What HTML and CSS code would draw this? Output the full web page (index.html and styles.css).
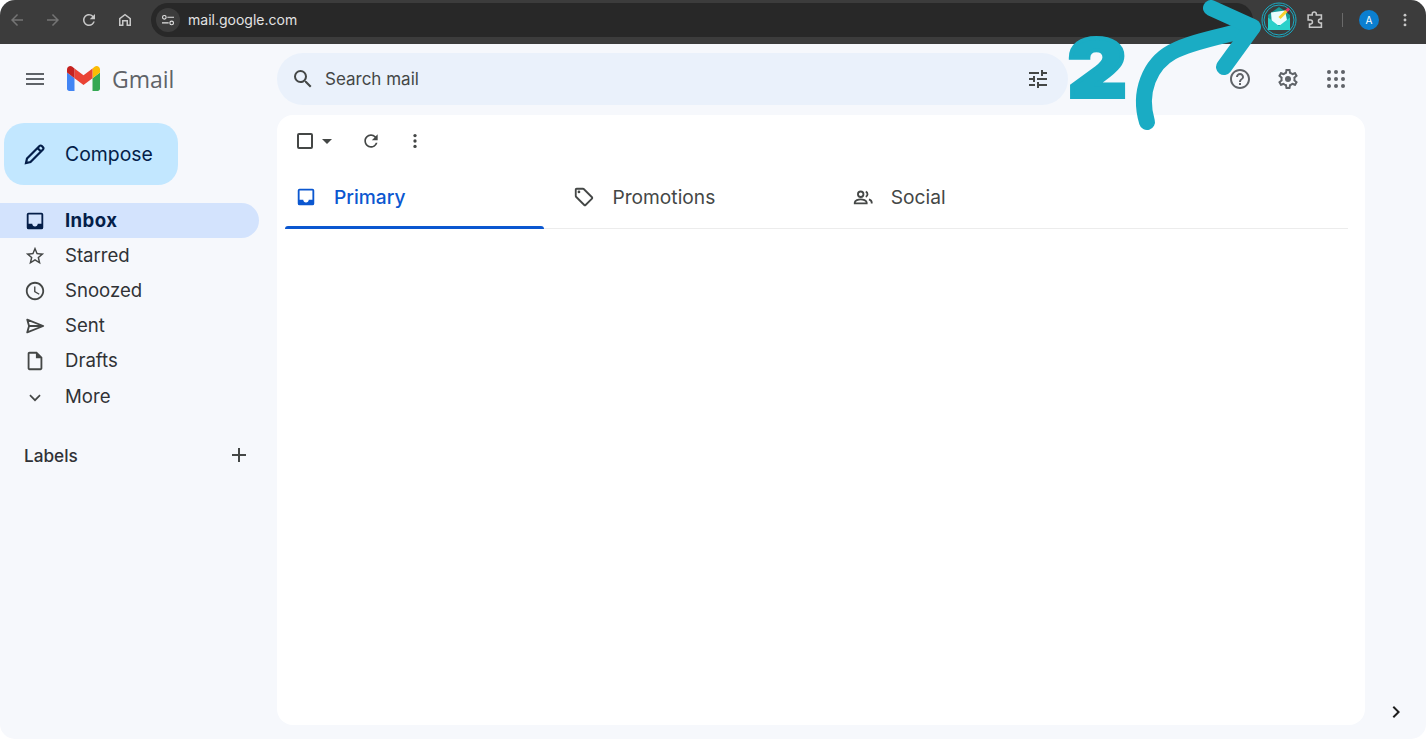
FILE: index.html
```html
<!DOCTYPE html>
<html lang="en">
<head>
<meta charset="utf-8">
<title>Gmail</title>
<link rel="stylesheet" href="styles.css">
</head>
<body>
<div class="window">
  <header class="chrome">
    <div class="chrome-nav">
      <svg class="cicon dim" viewBox="0 0 24 24"><path d="M20 11H7.800l5.600-5.600L12 4l-8 8 8 8 1.400-1.400L7.800 13H20z"/></svg>
      <svg class="cicon dim" viewBox="0 0 24 24"><path d="M4 11h12.200l-5.600-5.600L12 4l8 8-8 8-1.400-1.400 5.600-5.600H4z"/></svg>
      <svg class="cicon" viewBox="0 0 24 24"><path d="M17.650 6.350A7.958 7.958 0 0 0 12 4c-4.420 0-7.990 3.580-7.990 8s3.570 8 7.990 8c3.730 0 6.840-2.550 7.730-6h-2.080A5.990 5.990 0 0 1 12 18c-3.310 0-6-2.690-6-6s2.690-6 6-6c1.660 0 3.140.69 4.220 1.780L13 11h7V4l-2.350 2.350z"/></svg>
      <svg class="cicon" viewBox="0 0 24 24"><path d="M12 3.500 4 9.500V20h6v-6h4v6h6V9.500zM18 18h-2v-6H8v6H6v-7.500l6-4.500 6 4.500z"/></svg>
    </div>
    <div class="omnibox">
      <span class="site-info">
        <svg viewBox="0 0 24 24" class="site-svg"><path d="M3 15.500h10v1.800H3zM11 7h10v1.800H11z"/><circle cx="6.500" cy="8" r="2.700" fill="none" stroke="#e3e3e3" stroke-width="1.700"/><circle cx="17.500" cy="16.400" r="2.700" fill="none" stroke="#e3e3e3" stroke-width="1.700"/></svg>
      </span>
      <span class="url">mail.google.com</span>
    </div>
    <div class="chrome-actions">
      <span class="ext">
        <svg viewBox="0 0 36 36" class="ext-svg">
          <circle cx="18" cy="18" r="17" fill="none" stroke="#1aacc4" stroke-width="1"/>
          <circle cx="18" cy="18" r="15" fill="none" stroke="#1aacc4" stroke-width="1"/>
          <path d="M18 5 7 13v15h22V13z" fill="#169a98"/>
          <path d="M10 10.500 24 8.500 27 23H11z" fill="#eafcfd"/>
          <path d="M7 15.500 18 24l11-8.500V28H7z" fill="#2ad0ca"/>
          <path d="M18.500 16 25.500 9" stroke="#f7d02e" stroke-width="3"/>
          <path d="M25.500 9l2.500-2.500" stroke="#e8386d" stroke-width="3"/>
        </svg>
      </span>
      <svg class="cicon puzzle" viewBox="0 0 24 24"><path d="M9 5.500a2.200 2.200 0 0 1 4.400 0V6.500H19v4.500h-1a2.200 2.200 0 0 0 0 4.400h1V20H6v-3.500h1a2.200 2.200 0 0 0 0-4.400H4.500V6.500H9z" fill="none" stroke="#c7c7c7" stroke-width="1.700"/></svg>
      <span class="sep"></span>
      <span class="avatar">A</span>
      <svg class="cicon kebab" viewBox="0 0 24 24"><circle cx="12" cy="5.500" r="1.900"/><circle cx="12" cy="12" r="1.900"/><circle cx="12" cy="18.500" r="1.900"/></svg>
    </div>
  </header>

  <div class="app">
    <aside class="sidebar">
      <div class="brand">
        <svg class="icon menu" viewBox="0 0 24 24"><path d="M3 18h18v-2H3v2zm0-5h18v-2H3v2zm0-7v2h18V6H3z"/></svg>
        <svg class="gmail-logo" viewBox="52 42 88 66">
          <path fill="#4285f4" d="M58 108h14V74L52 59v43c0 3.320 2.690 6 6 6"/>
          <path fill="#34a853" d="M120 108h14c3.320 0 6-2.690 6-6V59l-20 15"/>
          <path fill="#fbbc04" d="M120 48v26l20-15v-8c0-7.420-8.470-11.650-14.400-7.200"/>
          <path fill="#ea4335" d="M72 74V48l24 18 24-18v26L96 92"/>
          <path fill="#c5221f" d="M52 51v8l20 15V48l-5.600-4.200c-5.940-4.450-14.400-.22-14.400 7.200"/>
        </svg>
        <span class="wordmark">Gmail</span>
      </div>
      <button class="compose">
        <svg class="icon pencil" viewBox="0 0 24 24"><path d="M3 21l1-4.500L16.500 4a1.600 1.600 0 0 1 2.300 0l1.200 1.200a1.600 1.600 0 0 1 0 2.300L7.500 20zM14.500 6l3.500 3.500" fill="none" stroke="#041e49" stroke-width="2.200"/></svg>
        <span>Compose</span>
      </button>
      <nav class="nav">
        <a class="nav-item active"><svg class="icon" viewBox="0 0 24 24"><path d="M19 3H5a2 2 0 0 0-2 2v14a2 2 0 0 0 2 2h14a2 2 0 0 0 2-2V5a2 2 0 0 0-2-2zm0 12h-4c0 1.660-1.350 3-3 3s-3-1.340-3-3H5V5h14v10z"/></svg><span>Inbox</span></a>
        <a class="nav-item"><svg class="icon" viewBox="0 0 24 24"><path d="M22 9.240l-7.190-.62L12 2 9.190 8.630 2 9.240l5.460 4.730L5.820 21 12 17.270 18.180 21l-1.630-7.030L22 9.240zM12 15.400l-3.760 2.270 1-4.280-3.320-2.880 4.380-.38L12 6.100l1.710 4.040 4.380.38-3.320 2.880 1 4.280L12 15.400z"/></svg><span>Starred</span></a>
        <a class="nav-item"><svg class="icon" viewBox="0 0 24 24"><path d="M11.990 2C6.470 2 2 6.480 2 12s4.470 10 9.990 10C17.520 22 22 17.520 22 12S17.520 2 11.990 2zM12 20c-4.420 0-8-3.580-8-8s3.580-8 8-8 8 3.580 8 8-3.580 8-8 8zm.5-13H11v6l5.250 3.150.75-1.230-4.500-2.670z"/></svg><span>Snoozed</span></a>
        <a class="nav-item"><svg class="icon" viewBox="0 0 24 24"><path d="M3.500 5 21 12 3.500 19 5.500 12zM5.500 12H21" fill="none" stroke="#444746" stroke-width="2" stroke-linejoin="round"/></svg><span>Sent</span></a>
        <a class="nav-item"><svg class="icon" viewBox="0 0 24 24"><path d="M14 2H6c-1.100 0-1.990.9-1.990 2L4 20c0 1.100.89 2 1.990 2H18c1.100 0 2-.9 2-2V8l-6-6zM6 20V4h7v5h5v11H6z"/></svg><span>Drafts</span></a>
        <a class="nav-item"><svg class="icon" viewBox="0 0 24 24"><path d="M6.500 10l5.500 5.500 5.500-5.500" fill="none" stroke="#444746" stroke-width="1.800"/></svg><span>More</span></a>
      </nav>
      <div class="labels">
        <span>Labels</span>
        <svg class="icon" viewBox="0 0 24 24"><path d="M19 13h-6v6h-2v-6H5v-2h6V5h2v6h6v2z"/></svg>
      </div>
    </aside>

    <div class="content">
      <div class="topbar">
        <div class="search">
          <svg class="icon" viewBox="0 0 24 24"><path d="M15.500 14h-.79l-.28-.27A6.471 6.471 0 0 0 16 9.500 6.500 6.500 0 1 0 9.500 16c1.610 0 3.090-.59 4.230-1.570l.27.28v.79l5 4.990L20.490 19l-4.990-5zm-6 0C7.010 14 5 11.990 5 9.500S7.010 5 9.500 5 14 7.010 14 9.500 11.990 14 9.500 14z"/></svg>
          <span class="search-text">Search mail</span>
          <svg class="icon tune" viewBox="0 0 24 24"><path d="M3 17v2h6v-2H3zM3 5v2h10V5H3zm10 16v-2h8v-2h-8v-2h-2v6h2zM7 9v2H3v2h4v2h2V9H7zm14 4v-2H11v2h10zm-6-4h2V7h4V5h-4V3h-2v6z"/></svg>
        </div>
        <div class="top-actions">
          <svg class="icon" viewBox="0 0 24 24"><path d="M11 18h2v-2h-2v2zm1-16C6.480 2 2 6.480 2 12s4.480 10 10 10 10-4.480 10-10S17.520 2 12 2zm0 18c-4.410 0-8-3.590-8-8s3.590-8 8-8 8 3.590 8 8-3.590 8-8 8zm0-14c-2.210 0-4 1.790-4 4h2c0-1.100.9-2 2-2s2 .9 2 2c0 2-3 1.750-3 5h2c0-2.250 3-2.500 3-5 0-2.210-1.790-4-4-4z"/></svg>
          <svg class="icon" viewBox="0 0 24 24"><path d="M19.430 12.980c.04-.32.07-.64.07-.98 0-.34-.03-.66-.07-.98l2.110-1.650c.19-.15.24-.42.12-.64l-2-3.460c-.09-.16-.26-.25-.44-.25-.06 0-.12.01-.17.03l-2.490 1c-.52-.4-1.080-.73-1.690-.98l-.38-2.650C14.460 2.180 14.250 2 14 2h-4c-.25 0-.46.18-.49.42l-.38 2.650c-.61.25-1.170.59-1.690.98l-2.490-1c-.06-.02-.12-.03-.18-.03-.17 0-.34.09-.43.25l-2 3.460c-.13.22-.07.49.12.64l2.110 1.650c-.04.32-.07.65-.07.98 0 .33.03.66.07.98l-2.110 1.650c-.19.15-.24.42-.12.64l2 3.460c.09.16.26.25.44.25.06 0 .12-.01.17-.03l2.490-1c.52.4 1.080.73 1.690.98l.38 2.650c.03.24.24.42.49.42h4c.25 0 .46-.18.49-.42l.38-2.650c.61-.25 1.170-.59 1.690-.98l2.490 1c.06.02.12.03.18.03.17 0 .34-.09.43-.25l2-3.460c.12-.22.07-.49-.12-.64l-2.110-1.650zm-1.980-1.710c.04.31.05.52.05.73 0 .21-.02.43-.05.73l-.14 1.130.89.7 1.080.84-.7 1.210-1.270-.51-1.040-.42-.9.68c-.43.32-.84.56-1.250.73l-1.060.43-.16 1.130-.2 1.350h-1.400l-.19-1.350-.16-1.130-1.060-.43c-.43-.18-.83-.41-1.230-.71l-.91-.7-1.060.43-1.270.51-.7-1.210 1.080-.84.89-.7-.14-1.130c-.03-.31-.05-.54-.05-.74s.02-.43.05-.73l.14-1.130-.89-.7-1.080-.84.7-1.210 1.270.51 1.040.42.9-.68c.43-.32.84-.56 1.250-.73l1.060-.43.16-1.130.2-1.350h1.390l.19 1.350.16 1.130 1.060.43c.43.18.83.41 1.230.71l.91.7 1.060-.43 1.270-.51.7 1.210-1.070.85-.89.7.14 1.130z"/><circle cx="12" cy="12" r="3"/></svg>
          <svg class="icon" viewBox="0 0 24 24"><circle cx="5" cy="5" r="2"/><circle cx="12" cy="5" r="2"/><circle cx="19" cy="5" r="2"/><circle cx="5" cy="12" r="2"/><circle cx="12" cy="12" r="2"/><circle cx="19" cy="12" r="2"/><circle cx="5" cy="19" r="2"/><circle cx="12" cy="19" r="2"/><circle cx="19" cy="19" r="2"/></svg>
        </div>
      </div>
      <div class="workspace">
        <main class="card">
          <div class="toolbar">
            <span class="select">
              <span class="checkbox"></span>
              <svg class="caret" viewBox="0 0 10 5"><path d="M0 0h10L5 5z"/></svg>
            </span>
            <svg class="tool" viewBox="0 0 24 24"><path d="M17.650 6.350A7.958 7.958 0 0 0 12 4c-4.420 0-7.990 3.580-7.990 8s3.570 8 7.990 8c3.730 0 6.840-2.550 7.730-6h-2.080A5.990 5.990 0 0 1 12 18c-3.310 0-6-2.690-6-6s2.690-6 6-6c1.660 0 3.140.69 4.220 1.780L13 11h7V4l-2.350 2.350z"/></svg>
            <svg class="tool" viewBox="0 0 24 24"><circle cx="12" cy="5.500" r="2"/><circle cx="12" cy="12" r="2"/><circle cx="12" cy="18.500" r="2"/></svg>
          </div>
          <div class="tabs">
            <div class="tab active">
              <svg class="icon" viewBox="0 0 24 24"><path d="M19 3H5a2 2 0 0 0-2 2v14a2 2 0 0 0 2 2h14a2 2 0 0 0 2-2V5a2 2 0 0 0-2-2zm0 12h-4c0 1.660-1.350 3-3 3s-3-1.340-3-3H5V5h14v10z"/></svg>
              <span>Primary</span>
            </div>
            <div class="tab">
              <svg class="icon" viewBox="0 0 24 24"><path d="M21.410 11.580l-9-9C12.050 2.220 11.550 2 11 2H4c-1.100 0-2 .9-2 2v7c0 .55.22 1.050.59 1.420l9 9c.36.36.86.58 1.410.58s1.050-.22 1.410-.59l7-7c.37-.36.59-.86.59-1.410s-.23-1.060-.59-1.420zM13 20.010L4 11V4h7v-.01l9 9-7 7.020z"/><circle cx="6.500" cy="6.500" r="1.500"/></svg>
              <span>Promotions</span>
            </div>
            <div class="tab">
              <svg class="icon" viewBox="0 0 24 24"><g fill="none" stroke="#444746" stroke-width="2"><circle cx="9.500" cy="9" r="3"/><path d="M3 19v-1c0-2.200 4-3.500 6.500-3.500S16 15.800 16 18v1zM15 6.200a3 3 0 0 1 0 5.600M18.500 14.600c1.700.6 3 1.700 3 3.400v1"/></g></svg>
              <span>Social</span>
            </div>
          </div>
        </main>
        <div class="side-strip">
          <svg class="chev" viewBox="0 0 24 24"><path d="M8.590 16.590 13.170 12 8.590 7.410 10 6l6 6-6 6z"/></svg>
        </div>
      </div>
    </div>
  </div>

  <span class="step-number">2</span>
  <svg class="step-arrow" viewBox="0 0 1426 140">
    <path d="M1147 122C1138 92 1150 64 1172 52C1192 41 1225 36 1252 28" fill="none" stroke="#1aacc4" stroke-width="16" stroke-linecap="round"/>
    <path d="M1211 8 1253 27 1224 67" fill="none" stroke="#1aacc4" stroke-width="16" stroke-linecap="round" stroke-linejoin="round"/>
  </svg>
</div>
</body>
</html>
```

FILE: styles.css
```css
* { box-sizing: border-box; }
html, body { margin: 0; height: 100%; background: #fff; overflow: hidden; }
body { font-family: Inter, "Liberation Sans", sans-serif; color: #202124; }

.window {
  position: relative;
  width: 1426px;
  height: 739px;
  border-radius: 15px;
  overflow: hidden;
  background: #f6f8fc;
  display: flex;
  flex-direction: column;
}

/* Browser chrome */
.chrome {
  height: 44px;
  flex: none;
  background: #3c3c3c;
  display: flex;
  align-items: flex-start;
  padding: 3px 0 0 8px;
}
.chrome-nav { display: flex; align-items: center; gap: 18px; width: 143px; height: 34px; }
.cicon { width: 18px; height: 18px; fill: #c7c7c7; flex: none; }
.cicon.dim { fill: #747474; }
.omnibox {
  width: 1102px;
  height: 34px;
  border-radius: 17px;
  background: #282828;
  display: flex;
  align-items: center;
  padding-left: 5px;
  gap: 8px;
}
.site-info {
  width: 24px;
  height: 24px;
  border-radius: 50%;
  background: #3c3c3c;
  display: flex;
  align-items: center;
  justify-content: center;
}
.site-svg { width: 16px; height: 16px; fill: #e3e3e3; }
.url { font-size: 14px; color: #e3e3e3; margin-bottom: 2px; }
.chrome-actions { display: flex; align-items: center; height: 34px; flex: 1; padding-left: 8px; }
.ext { width: 36px; height: 36px; flex: none; }
.ext-svg { display: block; width: 36px; height: 36px; }
.puzzle { width: 22px; height: 22px; margin-left: 7px; }
.sep { width: 1px; height: 14px; background: #6a6a6a; margin-left: 16px; }
.avatar {
  width: 20px;
  height: 20px;
  border-radius: 50%;
  background: #0b7fd0;
  color: #fff;
  font-size: 10px;
  display: flex;
  align-items: center;
  justify-content: center;
  margin-left: 16px;
}
.kebab { width: 18px; height: 18px; margin-left: 17px; }

/* App */
.app { flex: 1; display: grid; grid-template-columns: 277px 1fr; min-height: 0; }
.icon { width: 24px; height: 24px; fill: #444746; flex: none; }

.brand { height: 71px; display: flex; align-items: center; padding: 0 0 2px 23px; }
.menu { fill: #5f6368; }
.gmail-logo { width: 33px; height: 25px; margin-left: 20px; }
.wordmark { font-family: "Open Sans", sans-serif; font-size: 23px; color: #5f6368; margin-left: 12px; }

.compose {
  margin: 8px 0 0 4px;
  width: 174px;
  height: 62px;
  border: 0;
  border-radius: 20px;
  background: #c2e7ff;
  display: flex;
  align-items: center;
  gap: 18px;
  padding: 0 0 0 19px;
  font: 400 19.4px Inter, sans-serif;
  color: #041e49;
}
.pencil { fill: none; }

.nav { margin-top: 18px; display: flex; flex-direction: column; }
.nav-item {
  height: 35.2px;
  width: 259px;
  display: flex;
  align-items: center;
  gap: 19px;
  padding-left: 24px;
  font-size: 18.6px;
  color: #303236;
  border-radius: 0 18px 18px 0;
}
.nav-item span { margin-bottom: 2px; }
.nav-item .icon { width: 22px; height: 22px; }
.nav-item.active { background: #d3e3fd; color: #041e49; font-weight: 700; letter-spacing: .4px; }
.nav-item.active .icon { fill: #041e49; }

.labels {
  margin-top: 29px;
  width: 259px;
  height: 24px;
  padding: 0 8px 0 24px;
  display: flex;
  align-items: center;
  justify-content: space-between;
  font-size: 17.2px;
  font-weight: 500;
  color: #303236;
}

.content { display: flex; flex-direction: column; min-width: 0; }
.topbar { height: 71px; flex: none; display: flex; align-items: center; padding-bottom: 2px; }
.search {
  width: 791px;
  height: 52px;
  border-radius: 26px;
  background: #eaf1fb;
  display: flex;
  align-items: center;
  padding: 0 18px 0 14px;
  gap: 10px;
}
.search-text { flex: 1; font-size: 17px; color: #444746; }
.top-actions { margin-left: 160px; display: flex; gap: 24px; }
.top-actions .icon { fill: #5f6368; }

.workspace { flex: 1; display: flex; min-height: 0; padding-bottom: 14px; }
.card {
  flex: 1;
  background: #fff;
  border-radius: 16px;
  padding: 0 17px 0 8px;
}
.side-strip { width: 61px; flex: none; display: flex; align-items: flex-end; justify-content: center; }
.chev { width: 24px; height: 24px; fill: #1f1f1f; margin: 0 0 1px 1px; }

.toolbar { height: 52px; display: flex; align-items: center; padding-left: 12px; }
.select { display: flex; align-items: center; gap: 9px; width: 64px; }
.checkbox { width: 16px; height: 16px; border: 2px solid #444746; border-radius: 2px; }
.caret { width: 10px; height: 5px; fill: #444746; }
.tool { width: 20px; height: 20px; fill: #444746; margin-right: 24px; }

.tabs { display: flex; height: 62px; border-bottom: 1px solid #ececec; }
.tab {
  position: relative;
  width: 278.4px;
  display: flex;
  align-items: center;
  gap: 17px;
  padding: 0 0 2px 10px;
  font-size: 19.2px;
  color: #444746;
}
.tab .icon { width: 22px; height: 22px; }
.tab.active { color: #0b57d0; font-weight: 500; }
.tab.active .icon { fill: #0b57d0; }
.tab.active::after {
  content: "";
  position: absolute;
  left: 0;
  bottom: -1px;
  width: 259px;
  height: 3px;
  background: #0b57d0;
  border-radius: 3px 3px 0 0;
}

/* Overlay annotation */
.step-number {
  position: absolute;
  left: 1068px;
  top: 20px;
  font-family: Inter, sans-serif;
  font-size: 80px;
  line-height: 96px;
  font-weight: 900;
  color: #1aacc4;
  -webkit-text-stroke: 4px #1aacc4;
  transform: scaleX(1.13);
  transform-origin: left center;
}
.step-arrow { position: absolute; left: 0; top: 0; width: 1426px; height: 140px; pointer-events: none; }
```
